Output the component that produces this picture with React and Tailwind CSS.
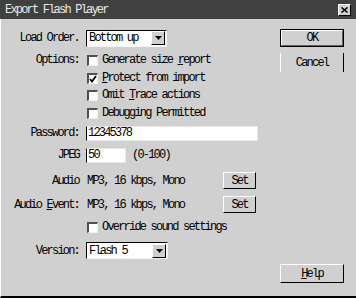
import React from 'react';

const font = { fontFamily: '"Liberation Mono", "DejaVu Sans Mono", monospace' };

function U({ children }) {
    return <span className="underline underline-offset-[1px]">{children}</span>;
}

function Checkbox({ checked }) {
    return (
        <div className="w-[11px] h-[11px] bg-white border-t-2 border-l-2 border-t-[#505050] border-l-[#505050] border-r border-b border-r-[#f0f0f0] border-b-[#f0f0f0] flex items-center justify-center shrink-0">
            {checked && (
                <svg width="8" height="8" viewBox="0 0 8 8">
                    <path d="M1 4 L3 6.5 L7 1" stroke="#000" strokeWidth="1.8" fill="none" />
                </svg>
            )}
        </div>
    );
}

function Select({ value, width }) {
    return (
        <div className={`${width} h-[17px] bg-white border-t border-l border-t-black border-l-black border-b border-r border-b-[#f4f4f4] border-r-[#f4f4f4] flex items-center`}>
            <span className="flex-1 pl-[2px] leading-none">{value}</span>
            <div className="w-[14px] h-[14px] mr-[1px] bg-[#d0d0d0] border-t border-l border-t-white border-l-white border-b border-r border-b-black border-r-black flex items-center justify-center">
                <svg width="7" height="4" viewBox="0 0 7 4"><path d="M0 0 H7 L3.5 4 Z" fill="#000" /></svg>
            </div>
        </div>
    );
}

function Row({ label, mt, h, children }) {
    return (
        <div className={`flex items-center ${mt} ${h}`}>
            <div className="w-[78px] text-right leading-none whitespace-nowrap">{label}</div>
            <div className="ml-[7px] flex items-center">{children}</div>
        </div>
    );
}

function Check({ checked, children }) {
    return (
        <div className="flex items-center gap-[4px] pl-[1px]">
            <Checkbox checked={checked} />
            <span className="leading-none whitespace-nowrap">{children}</span>
        </div>
    );
}

function SetButton() {
    return (
        <div className="w-[33px] h-[17px] border-t border-l border-t-white border-l-white border-b border-r border-b-black border-r-black flex items-center justify-center leading-none">
            Set
        </div>
    );
}

export default function App() {
    return (
        <div className="w-[356px] h-[298px] flex flex-col bg-[#d0d0d0] text-black text-[12px] tracking-[-1.8px]" style={font}>
            <div className="h-[19px] bg-[#404040] flex items-center justify-between pl-[5px] pr-[5px]">
                <span className="text-[#e8e8e8] leading-none">Export Flash Player</span>
                <div className="w-[13px] h-[12px] bg-[#d0d0d0] border-t border-l border-t-white border-l-white border-b border-r border-b-black border-r-black flex items-center justify-center">
                    <svg width="7" height="6" viewBox="0 0 7 6"><path d="M0.5 0.5 L6.5 5.5 M6.5 0.5 L0.5 5.5" stroke="#000" strokeWidth="1.5" /></svg>
                </div>
            </div>
            <div className="flex-1 flex border-l border-l-white border-b-2 border-b-black">
                <div className="w-[278px] flex flex-col pt-[10px]">
                    <Row label="Load Order." mt="" h="h-[18px]">
                        <Select value="Bottom up" width="w-[81px]" />
                    </Row>
                    <Row label="Options:" mt="mt-[5px]" h="h-[16px]">
                        <Check>Generate size <U>r</U>eport</Check>
                    </Row>
                    <Row label="" mt="mt-[2px]" h="h-[16px]">
                        <Check checked><U>P</U>rotect from import</Check>
                    </Row>
                    <Row label="" mt="mt-[1px]" h="h-[16px]">
                        <Check>Omit <U>T</U>race actions</Check>
                    </Row>
                    <Row label="" mt="mt-[2px]" h="h-[16px]">
                        <Check>Debugging Permitted</Check>
                    </Row>
                    <Row label="Password:" mt="mt-[4px]" h="h-[16px]">
                        <div className="w-[172px] h-[15px] bg-white border-l border-l-black border-t border-t-[#e8e8e8] border-r border-r-[#e8e8e8] border-b border-b-[#e8e8e8] flex items-center pl-[1px] leading-none">12345378</div>
                    </Row>
                    <Row label="JPEG" mt="mt-[6px]" h="h-[16px]">
                        <div className="w-[40px] h-[15px] bg-white border-l border-l-black border-t border-t-[#e8e8e8] border-r border-r-[#e8e8e8] border-b border-b-[#e8e8e8] flex items-center pl-[1px] leading-none">50</div>
                        <span className="ml-[6px] leading-none">(0-100)</span>
                    </Row>
                    <Row label="Audio" mt="mt-[9px]" h="h-[17px]">
                        <span className="w-[137px] pl-[1px] leading-none whitespace-nowrap">MP3, 16 kbps, Mono</span>
                        <SetButton />
                    </Row>
                    <Row label={<>Audio <U>E</U>vent:</>} mt="mt-[7px]" h="h-[17px]">
                        <span className="w-[137px] pl-[1px] leading-none whitespace-nowrap">MP3, 16 kbps, Mono</span>
                        <SetButton />
                    </Row>
                    <Row label="" mt="mt-[6px]" h="h-[16px]">
                        <Check>Override sound settings</Check>
                    </Row>
                    <Row label="Version:" mt="mt-[7px]" h="h-[17px]">
                        <Select value="Flash 5" width="w-[82px]" />
                    </Row>
                </div>
                <div className="flex-1 flex flex-col pt-[10px] pb-[13px] pl-[1px]">
                    <div className="w-[64px] h-[18px] border border-black">
                        <div className="w-full h-full border-t border-l border-t-white border-l-white border-b border-r border-b-[#606060] border-r-[#606060] flex items-center justify-center leading-none">OK</div>
                    </div>
                    <div className="mt-[6px] w-[64px] h-[19px] border-l border-l-white border-r border-r-black flex items-center justify-center leading-none">Cancel</div>
                    <div className="mt-auto w-[64px] h-[19px] border-t border-l border-t-white border-l-white border-b border-r border-b-black border-r-black flex items-center justify-center leading-none">
                        <span><U>H</U>elp</span>
                    </div>
                </div>
            </div>
        </div>
    );
}
